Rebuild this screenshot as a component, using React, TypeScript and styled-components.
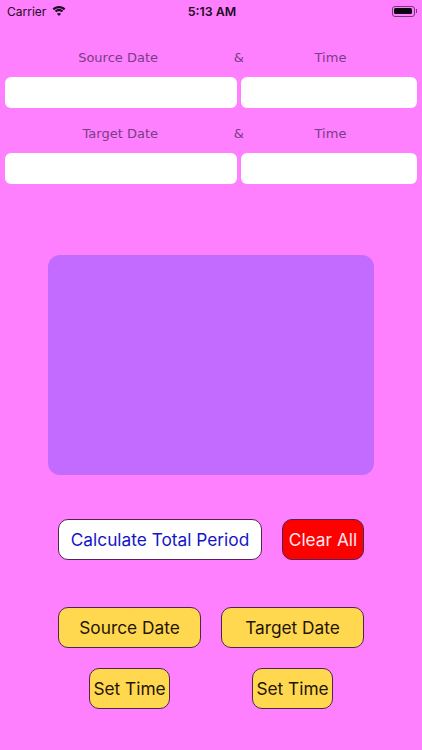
import styled, { createGlobalStyle } from "styled-components";

const GlobalStyle = createGlobalStyle`
    html, body {
        margin: 0;
        padding: 0;
        background-color: #ff80ff;
    }
`;

const Screen = styled.div`
    width: 422px;
    height: 750px;
    overflow: hidden;
    background-color: #ff80ff;
    font-family: Inter, "Liberation Sans", sans-serif;
    box-sizing: border-box;
`;

const StatusBar = styled.div`
    height: 22px;
    padding: 0 5px 0 7px;
    display: grid;
    grid-template-columns: 1fr auto 1fr;
    align-items: center;
    color: #1d0a24;
    font-size: 12px;
`;

const Carrier = styled.div`
    display: flex;
    align-items: center;
    gap: 6px;
`;

const Clock = styled.div`
    font-weight: 600;
    font-size: 12.4px;
`;

const Battery = styled.div`
    justify-self: end;
    display: flex;
    align-items: center;
`;

const BatteryBody = styled.div`
    width: 23px;
    height: 11px;
    padding: 1.5px;
    border: 1px solid #6f3a78;
    border-radius: 3px;
    box-sizing: border-box;

    &::before {
        content: "";
        display: block;
        height: 100%;
        border-radius: 1.5px;
        background-color: #0d0410;
    }
`;

const BatteryTip = styled.div`
    width: 1.5px;
    height: 4px;
    margin-left: 1px;
    background-color: #6f3a78;
`;

const Form = styled.div`
    padding: 25px 5px 0;
`;

const LabelRow = styled.div`
    display: grid;
    grid-template-columns: 153px 86px 173px;
    height: 20px;
    align-items: center;
    margin-bottom: 10px;
    font-family: "DejaVu Sans", sans-serif;
    font-size: 13px;
    color: #783d83;
`;

const DateLabel = styled.div`
    text-align: right;
    white-space: pre;
`;

const Ampersand = styled.div`
    text-align: right;
`;

const TimeLabel = styled.div`
    text-align: center;
`;

const FieldRow = styled.div`
    display: grid;
    grid-template-columns: 232px 176px;
    gap: 4px;
    margin-bottom: 15px;
`;

const Field = styled.div`
    height: 31px;
    border-radius: 6px;
    background-color: #ffffff;
`;

const ResultPanel = styled.div`
    width: 326px;
    height: 220px;
    margin: 71px 0 44px 48px;
    border-radius: 12px;
    background-color: #c46bff;
`;

const Actions = styled.div`
    display: flex;
    flex-direction: column;
    padding: 0 58px;
`;

const ButtonRow = styled.div<{ $gap: number; $inset?: number; $bottom: number }>`
    display: flex;
    gap: ${(p) => p.$gap}px;
    padding-left: ${(p) => p.$inset ?? 0}px;
    margin-bottom: ${(p) => p.$bottom}px;
`;

const Button = styled.div<{ $width: number; $bg: string; $fg: string }>`
    width: ${(p) => p.$width}px;
    height: 41px;
    display: flex;
    align-items: center;
    justify-content: center;
    box-sizing: border-box;
    border: 1.3px solid #4f2550;
    border-radius: 10px;
    background-color: ${(p) => p.$bg};
    color: ${(p) => p.$fg};
    font-size: 17.3px;
    white-space: nowrap;
`;

const YELLOW = "#ffd84f";
const INK = "#1f1508";

const WifiIcon = () => (
    <svg width="14" height="10" viewBox="0 0 15 11" fill="#1d0a24">
        <path d="M7.500 2.400c2.100 0 4 .8 5.400 2.200l1.700-1.800C12.800 1 10.300 0 7.500 0S2.200 1 .4 2.800l1.700 1.800c1.400-1.400 3.300-2.200 5.400-2.200z" />
        <path d="M7.500 5.700c1.200 0 2.200.5 3 1.200l1.600-1.700c-1.200-1.100-2.800-1.800-4.600-1.800s-3.400.7-4.600 1.800l1.600 1.700c.8-.7 1.800-1.200 3-1.200z" />
        <path d="M7.500 11 9.800 8.500c-.6-.6-1.400-.9-2.300-.9s-1.700.3-2.300.9z" />
    </svg>
);

const App = () => {
    return (
        <Screen>
            <GlobalStyle />
            <StatusBar>
                <Carrier>
                    Carrier
                    <WifiIcon />
                </Carrier>
                <Clock>5:13 AM</Clock>
                <Battery>
                    <BatteryBody />
                    <BatteryTip />
                </Battery>
            </StatusBar>
            <Form>
                <LabelRow>
                    <DateLabel>Source Date</DateLabel>
                    <Ampersand>&amp;</Ampersand>
                    <TimeLabel>Time</TimeLabel>
                </LabelRow>
                <FieldRow>
                    <Field />
                    <Field />
                </FieldRow>
                <LabelRow>
                    <DateLabel>Target Date</DateLabel>
                    <Ampersand>&amp;</Ampersand>
                    <TimeLabel>Time</TimeLabel>
                </LabelRow>
                <FieldRow>
                    <Field />
                    <Field />
                </FieldRow>
            </Form>
            <ResultPanel />
            <Actions>
                <ButtonRow $gap={20} $bottom={47}>
                    <Button $width={204} $bg="#ffffff" $fg="#1414c8">
                        Calculate Total Period
                    </Button>
                    <Button $width={82} $bg="#ff0000" $fg="#ffe6f0">
                        Clear All
                    </Button>
                </ButtonRow>
                <ButtonRow $gap={20} $bottom={20}>
                    <Button $width={143} $bg={YELLOW} $fg={INK}>
                        Source Date
                    </Button>
                    <Button $width={143} $bg={YELLOW} $fg={INK}>
                        Target Date
                    </Button>
                </ButtonRow>
                <ButtonRow $gap={82} $inset={31} $bottom={0}>
                    <Button $width={81} $bg={YELLOW} $fg={INK}>
                        Set Time
                    </Button>
                    <Button $width={81} $bg={YELLOW} $fg={INK}>
                        Set Time
                    </Button>
                </ButtonRow>
            </Actions>
        </Screen>
    );
};

export default App;
